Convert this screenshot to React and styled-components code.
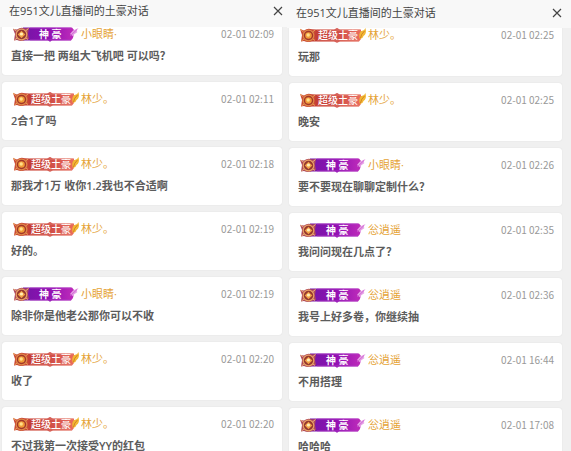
import React from "react";
import styled, { createGlobalStyle, css } from "styled-components";

const leftMessages = [
  { rank: "god", name: "小眼睛·", time: "02-01 02:09", text: "直接一把 两组大飞机吧 可以吗？" },
  { rank: "super", name: "林少。", time: "02-01 02:11", text: "2合1了吗" },
  { rank: "super", name: "林少。", time: "02-01 02:18", text: "那我才1万 收你1.2我也不合适啊" },
  { rank: "super", name: "林少。", time: "02-01 02:19", text: "好的。" },
  { rank: "god", name: "小眼睛·", time: "02-01 02:19", text: "除非你是他老公那你可以不收" },
  { rank: "super", name: "林少。", time: "02-01 02:20", text: "收了" },
  { rank: "super", name: "林少。", time: "02-01 02:20", text: "不过我第一次接受YY的红包" },
];

const rightMessages = [
  { rank: "super", name: "林少。", time: "02-01 02:25", text: "玩那" },
  { rank: "super", name: "林少。", time: "02-01 02:25", text: "晚安" },
  { rank: "god", name: "小眼睛·", time: "02-01 02:26", text: "要不要现在聊聊定制什么？" },
  { rank: "god", name: "忩逍遥", time: "02-01 02:35", text: "我问问现在几点了？" },
  { rank: "god", name: "忩逍遥", time: "02-01 02:36", text: "我号上好多卷，你继续抽" },
  { rank: "god", name: "忩逍遥", time: "02-01 16:44", text: "不用搭理" },
  { rank: "god", name: "忩逍遥", time: "02-01 17:08", text: "哈哈哈" },
];

const SuperArt = () => (
  <svg viewBox="0 0 68 16" aria-hidden="true">
    <defs>
      <linearGradient id="superBar" x1="0" x2="1" y1="0" y2="0">
        <stop offset="0" stopColor="#c0392f" />
        <stop offset="0.5" stopColor="#cd4a44" />
        <stop offset="1" stopColor="#ea6c5e" />
      </linearGradient>
    </defs>
    <path d="M10 2.500 L35 2.500 L38 1 L41 2.500 L62 2.500 L62 12 L60 14.500 L41 14.500 L38 15.800 L35 14.500 L10 14.500 Z" fill="url(#superBar)" />
    <path d="M18 3 H61 M18 14 H60" stroke="#e58a7c" strokeWidth="0.7" />
    <path d="M61 12 Q59 7 62 4 Q65 4.500 66.500 1 Q68 7 64.500 9 Q64 11.500 61 12 Z" fill="#f2b834" />
    <path d="M61.500 11 Q62 7 65.500 4" stroke="#c8741f" strokeWidth="0.8" fill="none" />
    <path d="M1 2 L5 3.500 Q9 0.500 13 2.500 L17 3 L16 8 L17 13 L13 14 Q9 16 5 14 L2 14.500 L3 8 Z" fill="#cb4a36" />
    <path d="M1 2 L4.500 5 M16 3 L13.500 5 M2.500 14 L5 12 M16 13.500 L14 12" stroke="#e9a25a" strokeWidth="1" />
    <circle cx="9.500" cy="8.500" r="5.300" fill="#a1352a" stroke="#dd8748" strokeWidth="1.200" />
    <circle cx="9.500" cy="8.500" r="3.300" fill="#f09a38" />
    <circle cx="9.200" cy="8" r="1.700" fill="#ffe08a" />
  </svg>
);

const GodArt = () => (
  <svg viewBox="0 0 68 16" aria-hidden="true">
    <defs>
      <linearGradient id="godBar" x1="0" x2="1" y1="0" y2="0">
        <stop offset="0" stopColor="#7416a6" />
        <stop offset="0.5" stopColor="#9010b2" />
        <stop offset="1" stopColor="#bf2cba" />
      </linearGradient>
    </defs>
    <path d="M11 1.500 L60 1.500 L62 4 L61 12 L59 14.500 L40 14.500 L38 15.800 L36 14.500 L11 14.500 Z" fill="url(#godBar)" />
    <path d="M18 2 H59 M18 14 H59" stroke="#b03fc8" strokeWidth="0.7" />
    <path d="M58 8 L61 4.500 L66.500 2 L64.500 5 L65.500 6 L62 8.500 L62 11 Z" fill="#e6a0e6" />
    <path d="M58 10 L65 3.500" stroke="#c858cc" strokeWidth="0.8" />
    <path d="M1 3 L5 3.500 Q9 0.500 13 2.500 L17 2 L16 8 L17 13 L13 14 Q9 16 5 14 L2 14.500 L3 8 Z" fill="#b04a5c" />
    <path d="M1.500 3 L4.500 5 M16.500 2.500 L13.500 5 M2.500 14 L5 12 M16 13.500 L14 12" stroke="#eab07a" strokeWidth="1" />
    <circle cx="9.500" cy="8.500" r="5.300" fill="#93352f" stroke="#e6a064" strokeWidth="1.200" />
    <path d="M9.500 4.700 L13.300 8.500 L9.500 12.300 L5.700 8.500 Z" fill="#f0a046" />
    <circle cx="9.500" cy="8" r="1.600" fill="#fff0b8" />
  </svg>
);

const RankBadge = ({ rank }) => (
  <Badge>
    {rank === "god" ? <GodArt /> : <SuperArt />}
    <BadgeLabel $rank={rank}>{rank === "god" ? "神 豪" : "超级土豪"}</BadgeLabel>
  </Badge>
);

const ChatPanel = ({ title, messages, wide }) => (
  <Panel>
    <PanelHeader $wide={wide}>
      <Title>{title}</Title>
      <CloseButton type="button" aria-label="关闭">
        <svg viewBox="0 0 10 10" aria-hidden="true">
          <path d="M1 1 L9 9 M9 1 L1 9" stroke="#444" strokeWidth="1.2" />
        </svg>
      </CloseButton>
    </PanelHeader>
    <MessageList $wide={wide}>
      {messages.map((message, index) => (
        <Card key={index}>
          <CardTop>
            <RankBadge rank={message.rank} />
            <Name>{message.name}</Name>
            <Time>{message.time}</Time>
          </CardTop>
          <Text>{message.text}</Text>
        </Card>
      ))}
    </MessageList>
  </Panel>
);

const App = () => {
  return (
    <>
      <GlobalStyle />
      <Page>
        <ChatPanel title="在951文儿直播间的土豪对话" messages={leftMessages} />
        <ChatPanel title="在951文儿直播间的土豪对话" messages={rightMessages} wide />
      </Page>
    </>
  );
};

export default App;

const GlobalStyle = createGlobalStyle`
  * {
    box-sizing: border-box;
  }

  body {
    margin: 0;
    background: #f0f0f0;
    font-family: "Open Sans", "Noto Sans CJK SC", sans-serif;
  }
`;

const Page = styled.main`
  display: grid;
  grid-template-columns: 287fr 284fr;
  height: 100vh;
  overflow: hidden;
`;

const Panel = styled.section`
  display: flex;
  flex-direction: column;
  min-width: 0;
`;

const PanelHeader = styled.header`
  display: flex;
  align-items: center;
  justify-content: space-between;
  flex-shrink: 0;
  height: 27px;
  padding: 0 4px 5px 9px;
  background: #f8f8f8;
  z-index: 1;

  ${(pr) =>
    pr.$wide &&
    css`
      height: 28px;
      padding: 0 9px 3px 9px;
    `}
`;

const Title = styled.h1`
  margin: 0;
  color: #444;
  font-size: 11px;
  font-weight: 400;
  line-height: 16px;
  white-space: nowrap;
`;

const CloseButton = styled.button`
  display: flex;
  padding: 0;
  border: 0;
  background: none;
  cursor: pointer;

  svg {
    width: 10px;
    height: 10px;
  }
`;

const MessageList = styled.div`
  display: flex;
  flex-direction: column;
  gap: 7px;
  margin-top: -10px;
  padding: 0 ${(pr) => (pr.$wide ? "9px" : "5px")} 0 2px;
`;

const Card = styled.article`
  flex-shrink: 0;
  height: 58px;
  padding: 8px 8px 0 9px;
  border-radius: 3px;
  background: #fff;
  box-shadow: 0 0 1px #ccc;
`;

const CardTop = styled.div`
  display: flex;
  align-items: center;
  height: 18px;
`;

const Badge = styled.span`
  display: grid;
  width: 68px;
  height: 16px;
  margin: 0 1px;

  > * {
    grid-area: 1 / 1;
  }

  svg {
    width: 68px;
    height: 16px;
  }
`;

const BadgeLabel = styled.span`
  padding-left: ${(pr) => (pr.$rank === "god" ? "27px" : "19px")};
  color: #fff;
  font-size: 10px;
  font-weight: ${(pr) => (pr.$rank === "god" ? 700 : 500)};
  line-height: 16px;
  white-space: nowrap;
  z-index: 1;
`;

const Name = styled.span`
  color: #e5a336;
  font-size: 11px;
  line-height: 16px;
`;

const Time = styled.time`
  margin-left: auto;
  color: #999;
  font-family: "Noto Sans CJK SC", sans-serif;
  font-size: 10px;
  line-height: 16px;
`;

const Text = styled.p`
  margin: 5px 0 0;
  color: #5c5c5c;
  font-size: 11px;
  font-weight: 600;
  line-height: 16px;
  white-space: nowrap;
`;
